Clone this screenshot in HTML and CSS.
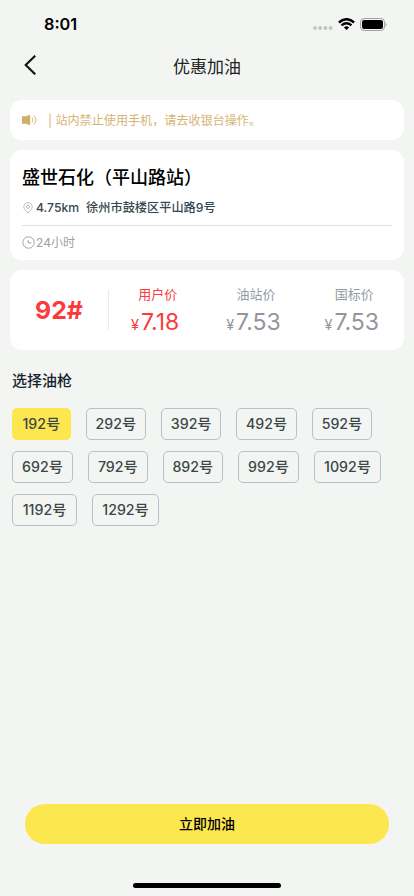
FILE: index.html
```html
<!DOCTYPE html>
<html lang="zh-CN">
<head>
<meta charset="utf-8">
<meta name="viewport" content="width=device-width, initial-scale=1">
<title>优惠加油</title>
<link rel="stylesheet" href="styles.css">
</head>
<body>
<div class="screen">
  <header class="status">
    <span class="time">8:01</span>
    <div class="signals">
      <svg width="20" height="4" viewBox="0 0 20 4" fill="#c2c4c1"><circle cx="2" cy="2" r="1.9"/><circle cx="7.2" cy="2" r="1.9"/><circle cx="12.4" cy="2" r="1.9"/><circle cx="17.6" cy="2" r="1.9"/></svg>
      <svg class="wifi" width="17" height="12" viewBox="0 0 17 12" fill="none" stroke="#000" stroke-width="2.4"><path d="M.9 4.5Q8.5-2.1 16.1 4.5"/><path d="M3.5 7.4Q8.5 3.1 13.5 7.4"/><path d="M5.9 9.4Q8.5 7.3 11.1 9.4L8.5 12Z" fill="#000" stroke="none"/></svg>
      <svg class="battery" width="27" height="13" viewBox="0 0 27 13"><rect x=".5" y=".5" width="24" height="12" rx="3.6" fill="none" stroke="#a0a29f"/><rect x="2" y="2" width="21" height="9" rx="2.2"/><path d="M25.6 4.5Q27.6 6.5 25.6 8.5Z" fill="#999b98"/></svg>
    </div>
  </header>
  <nav class="nav">
    <svg class="back" width="12" height="20" viewBox="0 0 12 20" fill="none" stroke="#111" stroke-width="2.1"><path d="M11.2 .7 1.7 10l9.5 9.3"/></svg>
    <h1>优惠加油</h1>
  </nav>
  <main>
    <section class="card notice">
      <svg width="15" height="12" viewBox="0 0 15 12" fill="none" stroke="#cfb06b" stroke-width=".9"><path d="M0 2.3h3.5L8.2 .8v10.4L3.5 9.7H0Z" fill="#cfb06b" stroke="none"/><path d="M10 3.3Q12.2 6 10 8.7M11.7 1.4Q16.2 6 11.7 10.6"/></svg>
      <span>| 站内禁止使用手机，请去收银台操作。</span>
    </section>
    <section class="card station">
      <h2>盛世石化（平山路站）</h2>
      <div class="place">
        <svg width="10" height="12" viewBox="0 0 10 12" fill="none" stroke="#a0a9ab" stroke-width=".8"><path d="M5 11C3.7 9.3.8 7.4.8 4.8a4.2 4.2 0 0 1 8.4 0C9.2 7.4 6.3 9.3 5 11Z"/><circle cx="5" cy="4.8" r="1.6"/></svg>
        <span class="distance">4.75km</span><span>徐州市鼓楼区平山路9号</span>
      </div>
      <div class="hours">
        <svg width="13" height="13" viewBox="0 0 13 13" fill="none" stroke="#9ba6ab"><circle cx="6.5" cy="6.5" r="5.7"/><path d="M6.2 4v3h3.2"/></svg>
        <span>24小时</span>
      </div>
    </section>
    <section class="card prices">
      <strong class="grade">92#</strong>
      <div class="price user"><span>用户价</span><p><small>¥</small>7.18</p></div>
      <div class="price"><span>油站价</span><p><small>¥</small>7.53</p></div>
      <div class="price"><span>国标价</span><p><small>¥</small>7.53</p></div>
    </section>
    <h3>选择油枪</h3>
    <div class="guns">
      <button class="active">192号</button><button>292号</button><button>392号</button><button>492号</button><button>592号</button>
      <button class="wide">692号</button><button class="short">792号</button><button>892号</button><button class="wide">992号</button><button class="long">1092号</button>
      <button class="medium">1192号</button><button class="long">1292号</button>
    </div>
  </main>
  <footer>
    <button class="submit">立即加油</button>
    <div class="home"></div>
  </footer>
</div>
</body>
</html>
```
FILE: styles.css
```css
* { box-sizing: border-box; margin: 0; padding: 0; }
body { background: #f3f5f2; font-family: Inter, "Noto Sans CJK SC", sans-serif; color: #36474f; }
.screen { width: 414px; height: 896px; display: flex; flex-direction: column; overflow: hidden; }
svg { display: block; flex: none; }
button { font: inherit; border: 0; }
.status { height: 44px; padding: 4px 27px 0 44px; display: flex; align-items: center; justify-content: space-between; }
.time { font-size: 16.3px; font-weight: 600; line-height: 20px; color: #000; }
.signals { display: flex; align-items: center; }
.signals svg:first-child { margin-top: 7px; }
.wifi { margin-left: 5px; }
.battery { margin-left: 5px; }
.nav { height: 44px; display: grid; grid-template-columns: 54px 1fr 54px; align-items: center; }
.back { margin-left: 24px; margin-top: -3px; }
.nav h1 { grid-column: 2; text-align: center; font-size: 17px; font-weight: 400; line-height: 24px; padding-top: 2px; color: #222; }
main { padding: 12px 10px 0; flex: 1; }
.card { background: #fff; border-radius: 12px; padding: 0 12px; margin-bottom: 10px; }
.notice { height: 40px; display: flex; align-items: center; gap: 11px; color: #d4b576; font-size: 12.1px; line-height: 18px; white-space: nowrap; }
.notice span { padding-top: 2px; }
.station { height: 110px; padding-top: 14px; }
.station h2 { font-size: 18px; line-height: 28px; font-weight: 500; color: #000; }
.place { height: 34px; padding: 0 0 2px 1px; border-bottom: 1px solid #dce1e9; display: flex; align-items: center; font-size: 12.2px; font-weight: 500; line-height: 18px; }
.distance { margin: 0 7px 0 3px; }
.hours { height: 32px; display: flex; align-items: center; gap: 1px; font-size: 12px; color: #99a3a3; line-height: 18px; }
.hours span { padding-top: 1px; }
.prices { height: 80px; padding: 0; display: grid; grid-template-columns: 99px repeat(3, 98.3px); align-items: center; }
.grade { height: 40px; border-right: 1px solid #e5ecef; text-align: center; font-size: 24.8px; line-height: 41px; font-weight: 700; color: #fc3a3d; }
.price { text-align: center; color: #929b9f; font-size: 13px; line-height: 18px; padding-top: 4px; }
.price span { position: relative; left: -.5px; }
.price p { font-size: 23px; line-height: 28px; margin: 5px 0 0 -6px; color: #92969c; }
.price small { font-size: 14.5px; margin-right: 2px; }
.price.user, .price.user p { color: #fc3a3d; }
h3 { margin: 20px 2px 17px; font-size: 15px; line-height: 21px; font-weight: 500; color: #17242f; }
.guns { padding: 0 2px; display: flex; flex-wrap: wrap; column-gap: 15px; row-gap: 11px; }
.guns button { width: 60.4px; height: 32px; border: 1px solid #b6c1cc; border-radius: 5px; background: transparent; color: #3c4749; font-size: 14.2px; font-weight: 500; line-height: 20px; white-space: nowrap; }
.guns .active { width: 58.6px; background: #fce74f; border-color: #fce74f; }
.guns .wide { width: 61px; }
.guns .short { width: 59.6px; }
.guns .medium { width: 65px; }
.guns .long { width: 67px; }
footer { height: 92px; padding: 0 25px; }
.submit { display: block; width: 364px; height: 40px; border-radius: 20px; background: #fce74f; color: #000; font-size: 14px; font-weight: 500; line-height: 20px; }
.home { width: 148px; height: 5px; border-radius: 3px; background: #000; margin: 39px auto 0; }
```
